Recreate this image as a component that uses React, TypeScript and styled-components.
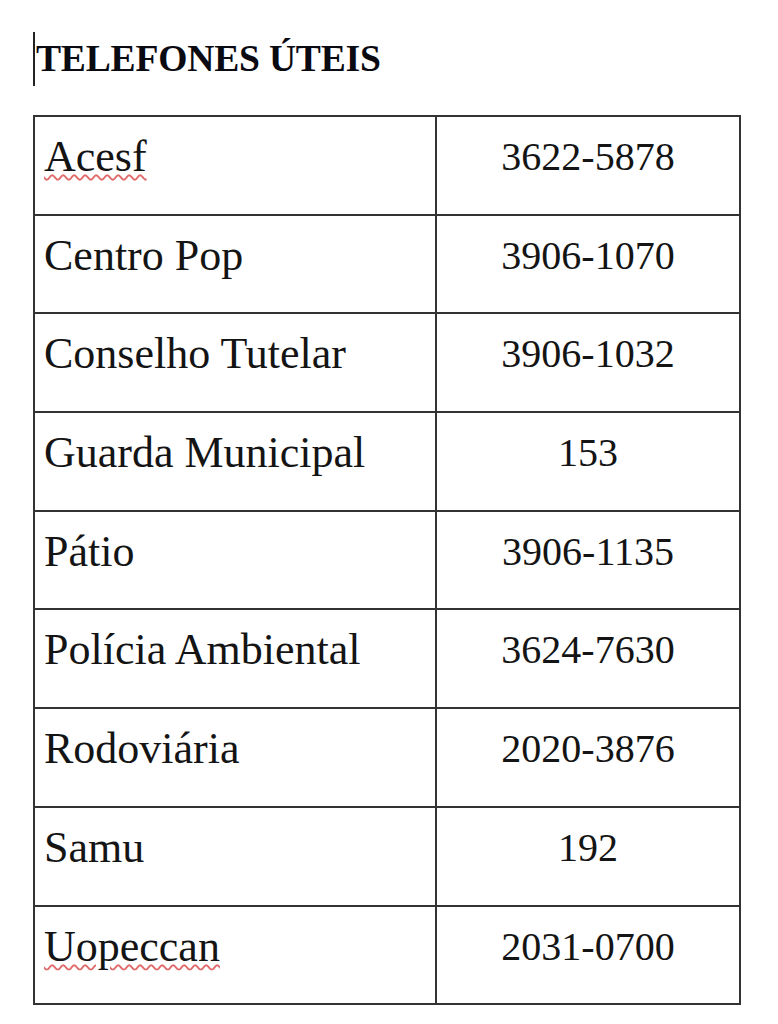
import styled, { createGlobalStyle } from "styled-components";

const contacts = [
    { name: "Acesf", phone: "3622-5878", flagged: true },
    { name: "Centro Pop", phone: "3906-1070" },
    { name: "Conselho Tutelar", phone: "3906-1032" },
    { name: "Guarda Municipal", phone: "153" },
    { name: "Pátio", phone: "3906-1135" },
    { name: "Polícia Ambiental", phone: "3624-7630" },
    { name: "Rodoviária", phone: "2020-3876" },
    { name: "Samu", phone: "192" },
    { name: "Uopeccan", phone: "2031-0700", flagged: true },
];

const GlobalStyle = createGlobalStyle`
    html, body {
        margin: 0;
        padding: 0;
        background: #ffffff;
    }
    body {
        font-family: "Liberation Serif", "DejaVu Serif", serif;
        color: #111;
    }
`;

const Page = styled.main`
    padding: 32px 0 0 33px;
`;

const TitleRow = styled.div`
    display: flex;
    align-items: center;
    height: 54px;
    margin-bottom: 29px;
`;

const Caret = styled.span`
    width: 2px;
    height: 54px;
    background: #222;
    margin-right: 1px;
`;

const Title = styled.h1`
    margin: 0;
    font-family: "Liberation Serif", serif;
    font-weight: 700;
    font-size: 37.6px;
    line-height: 1;
    color: #0a0a12;
    letter-spacing: -0.2px;
`;

const Table = styled.table`
    border-collapse: collapse;
    width: 708px;
    table-layout: fixed;
`;

const Row = styled.tr`
    height: 98.7px;
`;

const Cell = styled.td<{ $center?: boolean }>`
    border: 2px solid #333;
    padding: ${(p) => (p.$center ? "17px 0 0 0" : "15px 0 0 9px")};
    vertical-align: top;
    text-align: ${(p) => (p.$center ? "center" : "left")};
    font-family: "Liberation Serif", serif;
    font-size: ${(p) => (p.$center ? "40px" : "44px")};
    line-height: 1.15;
    color: #141414;
`;

const NameCol = styled.col`
    width: 402px;
`;

const Flagged = styled.span<{ $on?: boolean }>`
    text-decoration: ${(p) => (p.$on ? "underline wavy #e06a6a" : "none")};
    text-decoration-thickness: 1.5px;
    text-underline-offset: 3px;
`;

export default function App() {
    return (
        <>
            <GlobalStyle />
            <Page>
                <TitleRow>
                    <Caret />
                    <Title>TELEFONES ÚTEIS</Title>
                </TitleRow>
                <Table>
                    <colgroup>
                        <NameCol />
                        <col />
                    </colgroup>
                    <tbody>
                        {contacts.map((c) => (
                            <Row key={c.name}>
                                <Cell>
                                    <Flagged $on={c.flagged}>{c.name}</Flagged>
                                </Cell>
                                <Cell $center>{c.phone}</Cell>
                            </Row>
                        ))}
                    </tbody>
                </Table>
            </Page>
        </>
    );
}
